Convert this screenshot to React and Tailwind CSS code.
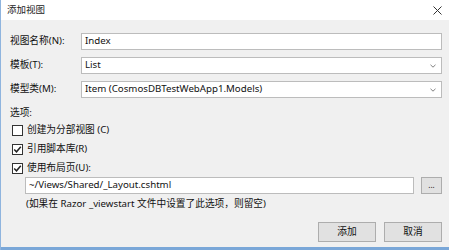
import React from 'react';

const font = { fontFamily: '"Noto Sans", "Noto Sans CJK SC", sans-serif' };

const Chevron = () => (
  <svg width="6" height="4" viewBox="0 0 6 4" className="mr-[5px]">
    <path d="M0.5 0.8 L3 3.2 L5.5 0.8" fill="none" stroke="#808080" strokeWidth="1" />
  </svg>
);

const CheckBox = ({ checked }) => (
  <svg width="11" height="11" viewBox="0 0 11 11" className="shrink-0">
    <rect x="0.5" y="0.5" width="10" height="10" fill="#fff" stroke="#333" />
    {checked && <path d="M2.2 5.5 L4.5 7.8 L8.8 2.8" fill="none" stroke="#222" strokeWidth="1.5" />}
  </svg>
);

const Row = ({ label, children }) => (
  <div className="flex items-center h-[17px]">
    <div className="w-[71px] shrink-0">{label}</div>
    {children}
  </div>
);

const App = () => {
  return (
    <div
      className="w-[449px] h-[250px] bg-[#f0f0f0] border-l border-[#8fb4de] flex flex-col text-[9.7px] text-[#111] overflow-hidden"
      style={font}
    >
      {/* title bar */}
      <div className="h-[20px] bg-white flex items-center justify-between pl-[6px] pr-[7px] shrink-0">
        <span className="text-[9.5px] text-[#222]">添加视图</span>
        <svg width="9" height="9" viewBox="0 0 9 9">
          <path d="M0.5 0.5 L8.5 8.5 M8.5 0.5 L0.5 8.5" stroke="#333" strokeWidth="1" />
        </svg>
      </div>

      <div className="flex-1 flex flex-col pl-[9px] pr-[7px] pt-[13px]">
        <div className="flex flex-col gap-[7px]">
          <Row label="视图名称(N):">
            <div className="flex-1 h-[17px] bg-white border border-[#bcbcbc] flex items-center pl-[3px]">Index</div>
          </Row>
          <Row label="模板(T):">
            <div className="flex-1 h-[17px] bg-white border border-[#bcbcbc] flex items-center justify-between pl-[3px]">
              <span>List</span>
              <Chevron />
            </div>
          </Row>
          <Row label="模型类(M):">
            <div className="flex-1 h-[17px] bg-white border border-[#bcbcbc] flex items-center justify-between pl-[3px]">
              <span>Item (CosmosDBTestWebApp1.Models)</span>
              <Chevron />
            </div>
          </Row>
        </div>

        <div className="h-[16px] mt-[7px] flex items-center">选项:</div>

        <div className="flex flex-col pl-[2px]">
          <div className="h-[19px] flex items-center gap-[4px]">
            <CheckBox />
            <span>创建为分部视图 (C)</span>
          </div>
          <div className="h-[19px] flex items-center gap-[4px]">
            <CheckBox checked />
            <span>引用脚本库(R)</span>
          </div>
          <div className="h-[18px] flex items-center gap-[4px]">
            <CheckBox checked />
            <span>使用布局页(U):</span>
          </div>
        </div>

        <div className="flex items-center gap-[7px] pl-[15px]">
          <div className="flex-1 h-[17px] bg-white border border-[#bcbcbc] flex items-center pl-[3px]">
            ~/Views/Shared/_Layout.cshtml
          </div>
          <div className="w-[21px] h-[17px] bg-[#e1e1e1] border border-[#adadad] flex items-center justify-center text-[8px] leading-none pb-[2px]">
            ...
          </div>
        </div>

        <div className="h-[16px] mt-[2px] pl-[16px] flex items-center">
          (如果在 Razor _viewstart 文件中设置了此选项，则留空)
        </div>

        <div className="flex justify-end gap-[8px] mt-[10px]">
          <div className="w-[58px] h-[20px] bg-[#e1e1e1] border border-[#adadad] flex items-center justify-center">添加</div>
          <div className="w-[58px] h-[20px] bg-[#e1e1e1] border border-[#adadad] flex items-center justify-center">取消</div>
        </div>
      </div>

      <div className="h-[3px] bg-[#7aa7d8] shrink-0" />
    </div>
  );
};

export default App;
